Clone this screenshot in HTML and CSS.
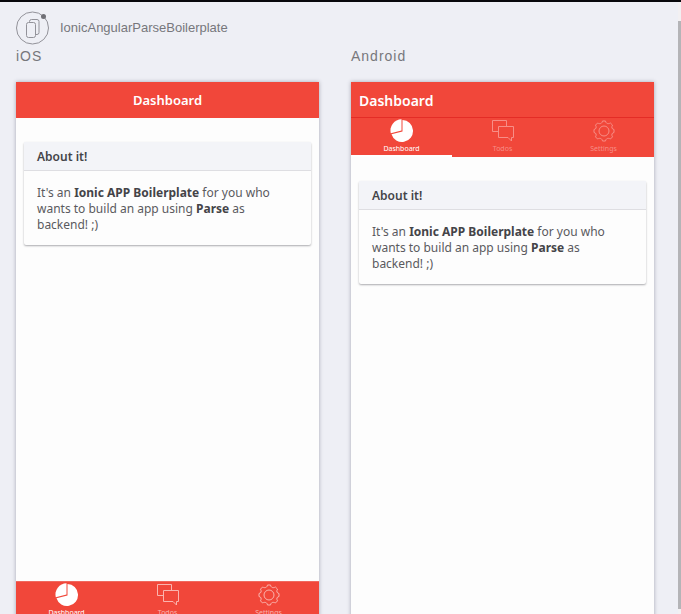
FILE: index.html
```
<!DOCTYPE html>
<html lang="en">
<head>
<meta charset="utf-8">
<title>IonicAngularParseBoilerplate</title>
<link rel="stylesheet" href="styles.css">
</head>
<body>
<svg class="sprite" aria-hidden="true">
  <symbol id="icon-pie" viewBox="0 0 24 24">
    <path fill="currentColor" d="M12.500 1A11 11 0 1 1 1.500 15.200L12.500 12.400z"/>
    <path fill="currentColor" d="M11.500.3v11.200L.8 14.200A11.200 11.200 0 0 1 11.500.3z"/>
  </symbol>
  <symbol id="icon-chat" viewBox="0 0 24 24">
    <path fill="none" stroke="currentColor" d="M7.500 12.500h-6v-11h14v6M7.500 7.500h15v11h-2v3.500l-3.500-3.500h-9.500z"/>
  </symbol>
  <symbol id="icon-gear" viewBox="0 0 24 24">
    <g fill="none" stroke="currentColor" stroke-linejoin="round" transform="translate(0 .5)">
      <path d="M10.500 1.500h3C14 4.200 16 4.800 18.400 3.500L20.500 5.600C19.200 8 19.800 9.500 22 10v3C19.800 13.500 19.200 15 20.500 17.400L18.400 19.500C16 18.200 14 18.800 13.500 21.500h-3C10 18.800 8 18.200 5.600 19.500L3.500 17.400C4.800 15 4.200 13.500 2 13v-3C4.200 9.500 4.800 8 3.500 5.600L5.600 3.500C8 4.800 10 4.200 10.500 1.500z"/>
      <circle cx="12" cy="11.500" r="5"/>
    </g>
  </symbol>
</svg>

<main class="page">
  <header class="brand">
    <svg class="logo" viewBox="0 0 34 34" aria-hidden="true">
      <g fill="none" stroke="#929299">
        <circle cx="16.500" cy="17" r="16"/>
        <rect x="10.500" y="11.500" width="9" height="15" rx="2"/>
        <path d="M13.500 11V10.500a2 2 0 0 1 2-2h5.500a2 2 0 0 1 2 2v11a2 2 0 0 1-2 2h-1"/>
      </g>
      <circle cx="27.500" cy="5.500" r="2.500" fill="#707076"/>
    </svg>
    <h1 class="brand-name">IonicAngularParseBoilerplate</h1>
  </header>

  <div class="previews">
    <section class="preview">
      <h2 class="platform">iOS</h2>
      <div class="phone">
        <div class="title-bar title-bar-center">Dashboard</div>
        <div class="content">
          <article class="card">
            <h3 class="card-title">About it!</h3>
            <p class="card-text">It's an <b>Ionic APP Boilerplate</b> for you who wants to build an app using <b>Parse</b> as backend! ;)</p>
          </article>
        </div>
        <nav class="tabs" aria-label="iOS tabs">
          <a class="tab tab-active" href="#dashboard"><svg class="tab-icon"><use href="#icon-pie"/></svg>Dashboard</a>
          <a class="tab" href="#todos"><svg class="tab-icon"><use href="#icon-chat"/></svg>Todos</a>
          <a class="tab" href="#settings"><svg class="tab-icon"><use href="#icon-gear"/></svg>Settings</a>
        </nav>
      </div>
    </section>

    <section class="preview">
      <h2 class="platform">Android</h2>
      <div class="phone">
        <div class="title-bar">Dashboard</div>
        <nav class="tabs tabs-top" aria-label="Android tabs">
          <a class="tab tab-active" href="#dashboard"><svg class="tab-icon"><use href="#icon-pie"/></svg>Dashboard</a>
          <a class="tab" href="#todos"><svg class="tab-icon"><use href="#icon-chat"/></svg>Todos</a>
          <a class="tab" href="#settings"><svg class="tab-icon"><use href="#icon-gear"/></svg>Settings</a>
        </nav>
        <div class="content">
          <article class="card">
            <h3 class="card-title">About it!</h3>
            <p class="card-text">It's an <b>Ionic APP Boilerplate</b> for you who wants to build an app using <b>Parse</b> as backend! ;)</p>
          </article>
        </div>
      </div>
    </section>
  </div>
</main>
<div class="scroll-track"><div class="scroll-thumb"></div></div>
</body>
</html>
```
FILE: styles.css
```
* {
  box-sizing: border-box;
}

body {
  display: flex;
  height: 100vh;
  margin: 0;
  overflow: hidden;
  border-top: 2px solid #08080c;
  background: #eeeff5;
  font-family: "Noto Sans", "Open Sans", sans-serif;
}

h1, h2, h3, p {
  margin: 0;
  font-weight: 400;
}

.sprite {
  position: absolute;
  width: 0;
  height: 0;
}

.page {
  flex: 1;
  padding: 9px 24px 0 16px;
}

.brand {
  display: flex;
  align-items: center;
  gap: 10px;
  color: #77777c;
  font-family: "Liberation Sans", Arial, sans-serif;
}

.logo {
  width: 34px;
  height: 34px;
}

.brand-name {
  font-size: 13px;
  line-height: 16px;
}

.previews {
  display: grid;
  grid-template-columns: 1fr 1fr;
  gap: 32px;
}

.platform {
  padding: 2px 0 17px;
  color: #77777c;
  font-family: "Liberation Sans", Arial, sans-serif;
  font-size: 14px;
  line-height: 18px;
  letter-spacing: 1px;
}

.phone {
  display: flex;
  flex-direction: column;
  aspect-ratio: 9 / 16;
  background: #fdfdfd;
  box-shadow: 0 0 4px rgba(60, 60, 80, 0.4);
}

.title-bar {
  padding: 2px 8px 0;
  background: #f1473a;
  color: #fff;
  font-size: 14px;
  font-weight: 600;
  line-height: 33px;
}

.title-bar-center {
  padding-bottom: 1px;
  font-size: 13px;
  text-align: center;
}

.content {
  flex: 1;
  padding: 24px 8px;
}

.card {
  border-radius: 2px;
  box-shadow: 0 1px 2px rgba(50, 50, 60, 0.4);
  color: #5a5a5e;
  font-size: 12px;
}

.card-title {
  padding: 7px 13px 5px;
  border-bottom: 1px solid #dedee2;
  background: #f3f4f8;
  color: #444448;
  font-size: 12px;
  font-weight: 600;
  line-height: 16px;
}

.card-text {
  padding: 14px 13px 12px;
  line-height: 16px;
}

.card-text b {
  color: #444448;
}

.tabs {
  display: flex;
  border-top: 1px solid #f0685e;
  background: #f1473a;
}

.tabs-top {
  border-top-color: #e42c26;
}

.tab {
  display: flex;
  flex: 1;
  flex-direction: column;
  align-items: center;
  padding-top: 1px;
  border-bottom: 2px solid transparent;
  color: #fab4ae;
  font-size: 7px;
  line-height: 12px;
  text-decoration: none;
}

.tabs-top .tab {
  color: #f78e87;
}

.tabs .tab-active {
  color: #fff;
}

.tabs-top .tab-active {
  border-bottom-color: #fff;
}

.tab-icon {
  width: 24px;
  height: 24px;
}

.scroll-track {
  width: 3px;
  padding: 19px 0 5px;
  background: #f2f0f2;
}

.scroll-thumb {
  height: 100%;
  background: #b4b4b7;
}
```
